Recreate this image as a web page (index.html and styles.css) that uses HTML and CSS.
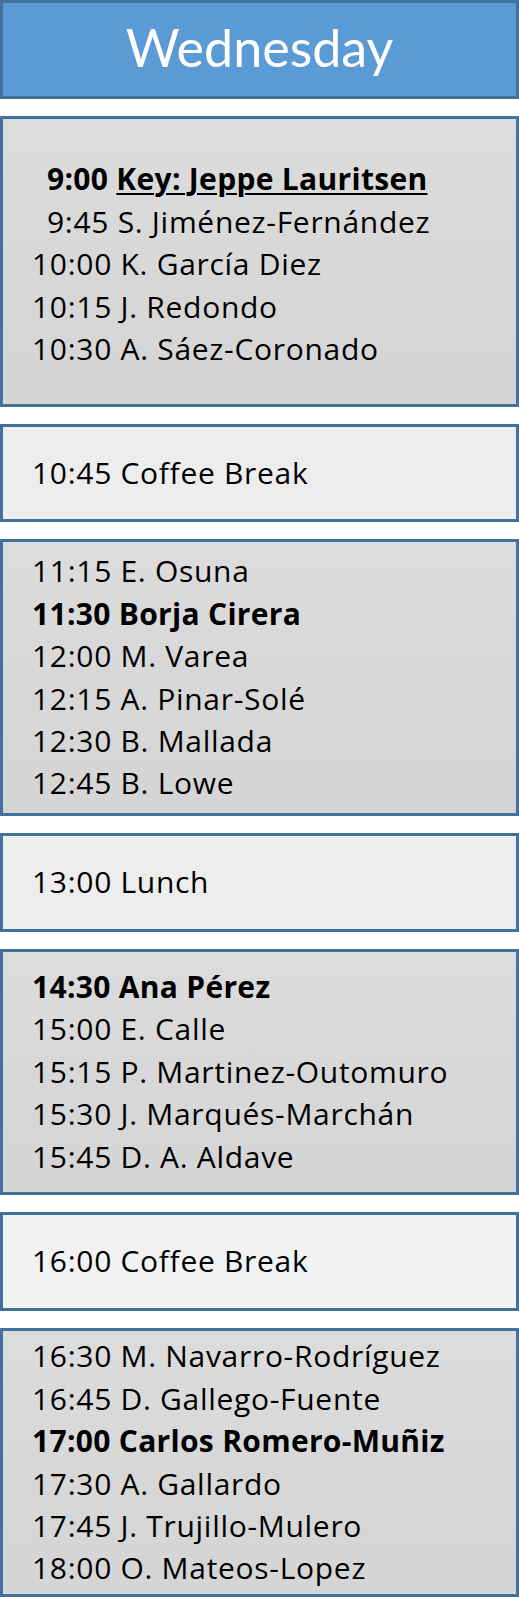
FILE: index.html
```html
<!DOCTYPE html>
<html lang="es">
<head>
<meta charset="utf-8">
<title>Wednesday</title>
<link rel="stylesheet" href="styles.css">
</head>
<body>
<main class="schedule">
  <header class="box day">Wednesday</header>

  <section class="box session s1">
    <div class="line bold"><span class="pad"></span>9:00 <span class="key">Key: Jeppe Lauritsen</span></div>
    <div class="line"><span class="pad"></span>9:45 S. Jiménez-Fernández</div>
    <div class="line">10:00 K. García Diez</div>
    <div class="line">10:15 J. Redondo</div>
    <div class="line">10:30 A. Sáez-Coronado</div>
  </section>

  <section class="box pause c1">
    <div class="line">10:45 Coffee Break</div>
  </section>

  <section class="box session s2">
    <div class="line">11:15 E. Osuna</div>
    <div class="line bold">11:30 Borja Cirera</div>
    <div class="line">12:00 M. Varea</div>
    <div class="line">12:15 A. Pinar-Solé</div>
    <div class="line">12:30 B. Mallada</div>
    <div class="line">12:45 B. Lowe</div>
  </section>

  <section class="box pause c2">
    <div class="line">13:00 Lunch</div>
  </section>

  <section class="box session s3">
    <div class="line bold">14:30 Ana Pérez</div>
    <div class="line">15:00 E. Calle</div>
    <div class="line">15:15 P. Martinez-Outomuro</div>
    <div class="line">15:30 J. Marqués-Marchán</div>
    <div class="line">15:45 D. A. Aldave</div>
  </section>

  <section class="box pause c3">
    <div class="line">16:00 Coffee Break</div>
  </section>

  <section class="box session s4">
    <div class="line">16:30 M. Navarro-Rodríguez</div>
    <div class="line">16:45 D. Gallego-Fuente</div>
    <div class="line bold">17:00 Carlos Romero-Muñiz</div>
    <div class="line">17:30 A. Gallardo</div>
    <div class="line">17:45 J. Trujillo-Mulero</div>
    <div class="line">18:00 O. Mateos-Lopez</div>
  </section>
</main>
</body>
</html>
```

FILE: styles.css
```css
html, body {
  margin: 0;
  padding: 0;
  background: #ffffff;
}

body {
  width: 519px;
  font-family: "Open Sans", "Noto Sans", sans-serif;
  color: #000000;
}

.schedule {
  display: flex;
  flex-direction: column;
  gap: 17px;
}

.box {
  box-sizing: border-box;
  border: 3px solid #41719c;
  display: flex;
  flex-direction: column;
  justify-content: center;
  padding-left: 29px;
  font-size: 30px;
  line-height: 42.4px;
  letter-spacing: 0.7px;
}

.day {
  height: 99px;
  background: #5b9bd5;
  color: #ffffff;
  font-family: Lato, "Open Sans", sans-serif;
  font-size: 52px;
  align-items: center;
  padding: 0 0 4px 0;
  letter-spacing: 0;
}

.session {
  background: linear-gradient(180deg, #dcdcdc 0%, #d8d8d8 50%, #d5d5d5 100%);
}

.pause {
  background: #ededed;
}

.c1 { height: 98px; }
.c2 { height: 99px; }
.c3 { height: 99px; background: #f2f2f2; }

.s1 { height: 291px; padding-top: 6px; }
.s2 { height: 277px; }
.s3 { height: 246px; }
.s4 { height: 269px; }

.line {
  white-space: nowrap;
}

.bold {
  font-weight: 700;
  letter-spacing: 0.3px;
}

.pad {
  display: inline-block;
  width: 15px;
}

.key {
  text-decoration: underline;
  text-decoration-thickness: 2px;
  text-underline-offset: 3px;
}
```
